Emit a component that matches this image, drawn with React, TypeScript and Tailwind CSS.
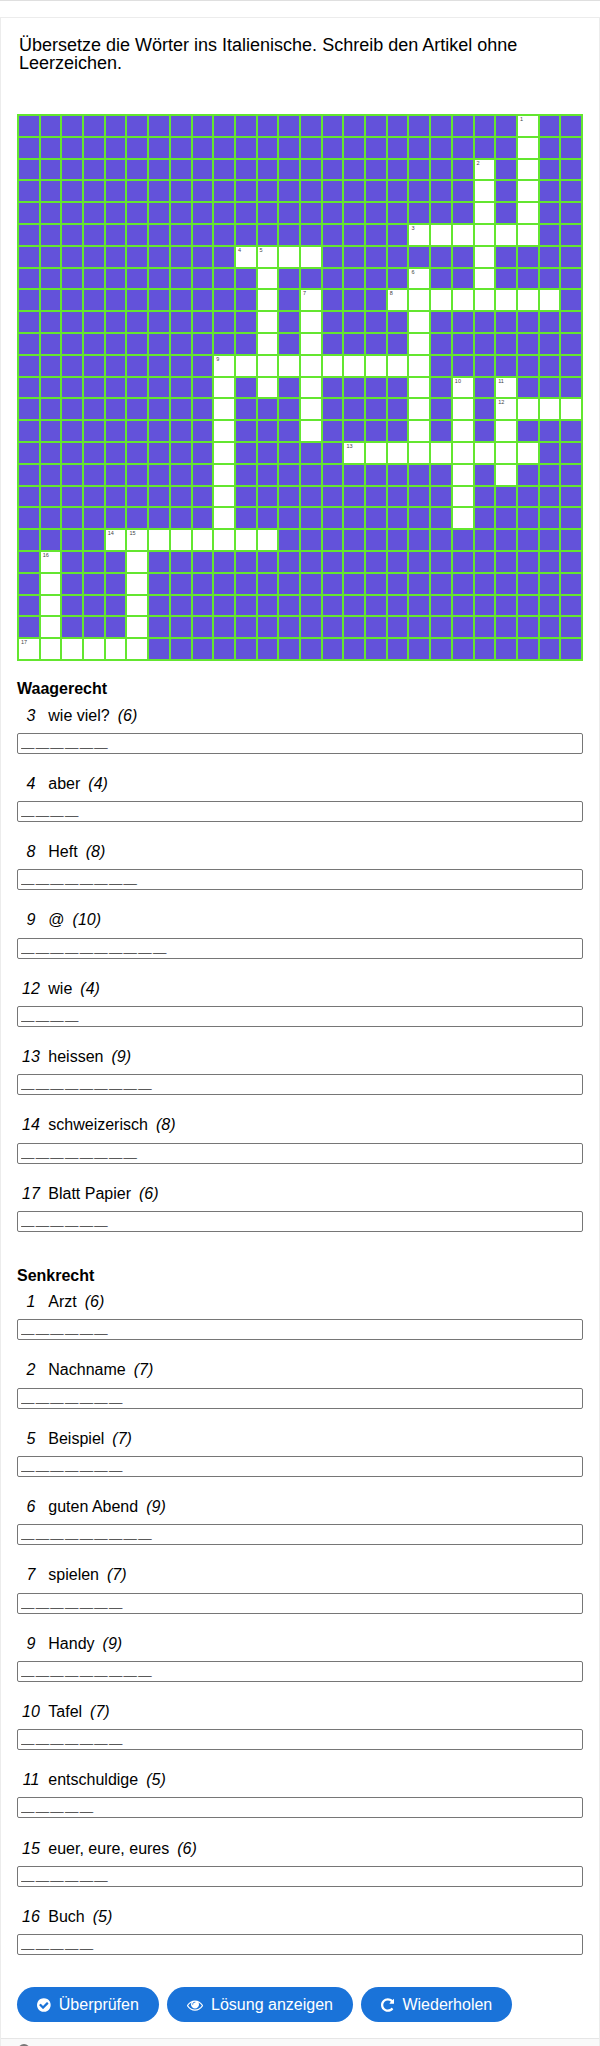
interface Clue {
  num: number
  text: string
  length: number
  row: number
  col: number
}

const COLS = 26
const ROWS = 25

const ACROSS: Clue[] = [
  { num: 3, text: 'wie viel?', length: 6, row: 5, col: 18 },
  { num: 4, text: 'aber', length: 4, row: 6, col: 10 },
  { num: 8, text: 'Heft', length: 8, row: 8, col: 17 },
  { num: 9, text: '@', length: 10, row: 11, col: 9 },
  { num: 12, text: 'wie', length: 4, row: 13, col: 22 },
  { num: 13, text: 'heissen', length: 9, row: 15, col: 15 },
  { num: 14, text: 'schweizerisch', length: 8, row: 19, col: 4 },
  { num: 17, text: 'Blatt Papier', length: 6, row: 24, col: 0 },
]

const DOWN: Clue[] = [
  { num: 1, text: 'Arzt', length: 6, row: 0, col: 23 },
  { num: 2, text: 'Nachname', length: 7, row: 2, col: 21 },
  { num: 5, text: 'Beispiel', length: 7, row: 6, col: 11 },
  { num: 6, text: 'guten Abend', length: 9, row: 7, col: 18 },
  { num: 7, text: 'spielen', length: 7, row: 8, col: 13 },
  { num: 9, text: 'Handy', length: 9, row: 11, col: 9 },
  { num: 10, text: 'Tafel', length: 7, row: 12, col: 20 },
  { num: 11, text: 'entschuldige', length: 5, row: 12, col: 22 },
  { num: 15, text: 'euer, eure, eures', length: 6, row: 19, col: 5 },
  { num: 16, text: 'Buch', length: 5, row: 20, col: 1 },
]

// cell key -> clue number, or null when no word starts there
const cells = new Map<number, number | null>()

function place(clue: Clue, step: number) {
  const start = clue.row * COLS + clue.col
  for (let i = 0; i < clue.length; i++) {
    const key = start + i * step
    if (!cells.has(key)) cells.set(key, null)
  }
  cells.set(start, clue.num)
}

ACROSS.forEach((clue) => place(clue, 1))
DOWN.forEach((clue) => place(clue, COLS))

function Grid() {
  return (
    <div className="grid h-[547px] w-[566px] grid-cols-[repeat(26,minmax(0,1fr))] grid-rows-[repeat(25,minmax(0,1fr))] border-r-2 border-b-2 border-[#64e62f]">
      {Array.from({ length: COLS * ROWS }, (_, key) =>
        cells.has(key) ? (
          <div
            key={key}
            className="overflow-hidden border-t-2 border-l-2 border-[#64e62f] bg-white pl-[2px] text-[5.5px] leading-[6px] text-[#444]"
          >
            {cells.get(key)}
          </div>
        ) : (
          <div key={key} className="border-t-2 border-l-2 border-[#64e62f] bg-[#6352da]" />
        )
      )}
    </div>
  )
}

function ClueList({ title, clues }: { title: string; clues: Clue[] }) {
  return (
    <section>
      <h2 className="h-[25.3px] text-base leading-[25px] font-bold">{title}</h2>
      <ul>
        {clues.map((clue) => (
          <li key={clue.num} className="h-[68.3px]">
            <div className="flex h-[31.2px] text-base leading-[27.1px]">
              <span className="mr-[3.3px] w-7 text-center italic">{clue.num}</span>
              <span>{clue.text}</span>
              <span className="ml-2 italic">({clue.length})</span>
            </div>
            <input
              type="text"
              defaultValue={'\uFF3F'.repeat(clue.length)}
              className="block h-[21px] w-full rounded-[2px] border border-[#767676] bg-white px-[3px] pb-[4px] font-['Liberation_Sans','Noto_Sans_CJK_JP',sans-serif] text-[13.33px] leading-[15px] font-bold tracking-[1.33px] text-black [-webkit-text-stroke:0.15px_#000]"
            />
          </li>
        ))}
      </ul>
    </section>
  )
}

function CheckIcon() {
  return (
    <svg viewBox="128 0 1536 1792" className="h-4 w-[13.7px]" fill="currentColor">
      <path d="M1412 734q0-28-18-46l-91-90q-19-19-45-19t-45 19l-408 407-226-226q-19-19-45-19t-45 19l-91 90q-18 18-18 46 0 27 18 45l362 362q19 19 45 19 27 0 46-19l543-543q18-18 18-45zm252 162q0 209-103 385.5t-279.5 279.5-385.5 103-385.5-103-279.5-279.5-103-385.5 103-385.5 279.5-279.5 385.5-103 385.5 103 279.5 279.5 103 385.5z" />
    </svg>
  )
}

function EyeIcon() {
  return (
    <svg viewBox="0 0 1792 1792" className="h-4 w-4" fill="currentColor">
      <path d="M1664 960q-152-236-381-353 61 104 61 225 0 185-131.5 316.5t-316.5 131.5-316.5-131.5-131.5-316.5q0-121 61-225-229 117-381 353 133 205 333.5 326.5t434.5 121.5 434.5-121.5 333.5-326.5zm-720-384q0-20-14-34t-34-14q-125 0-214.5 89.5t-89.5 214.5q0 20 14 34t34 14 34-14 14-34q0-86 61-147t147-61q20 0 34-14t14-34zm848 384q0 34-20 69-140 230-376.5 368.5t-499.5 138.5-499.5-139-376.5-368q-20-35-20-69t20-69q140-229 376.5-368t499.5-139 499.5 139 376.5 368q20 35 20 69z" />
    </svg>
  )
}

function RepeatIcon() {
  return (
    <svg viewBox="128 0 1536 1792" className="h-4 w-[13.7px]" fill="currentColor">
      <path d="M1664 256v448q0 26-19 45t-45 19h-448q-42 0-59-40-17-39 14-69l138-138q-148-137-349-137-104 0-198.5 40.5t-163.5 109.5-109.5 163.5-40.5 198.5 40.5 198.5 109.5 163.5 163.5 109.5 198.5 40.5q119 0 225-52t179-147q7-10 23-12 15 0 25 9l137 138q9 8 9.5 20.5t-7.5 22.5q-109 132-264 204.5t-327 72.5q-156 0-298-61t-245-164-164-245-61-298 61-298 164-245 245-164 298-61q147 0 284.5 55.5t244.5 156.5l130-129q29-31 70-14 39 17 39 59z" />
    </svg>
  )
}

const BUTTON =
  'flex h-[35px] items-center justify-center gap-2 rounded-full bg-[#1a73d9] text-base leading-4 text-white'

export default function App() {
  return (
    <div className="h-[2046px] overflow-hidden border-t border-[#dfdfdf] bg-white pt-4 font-['Liberation_Sans',Arial,sans-serif] text-black">
      <div className="h-[2040px] border border-[#ececec]">
        <main className="h-[2020px] px-4">
          <p className="h-24 pt-[18px] pl-0.5 text-[18px] leading-[18px]">
            Übersetze die Wörter ins Italienische. Schreib den Artikel ohne Leerzeichen.
          </p>
          <Grid />
          <div className="pt-[15.3px]">
            <ClueList title="Waagerecht" clues={ACROSS} />
          </div>
          <div className="pt-[14.9px]">
            <ClueList title="Senkrecht" clues={DOWN} />
          </div>
          <div className="flex gap-2 pt-[16.1px]">
            <button className={`${BUTTON} w-[142px]`}>
              <CheckIcon />
              Überprüfen
            </button>
            <button className={`${BUTTON} w-[186px]`}>
              <EyeIcon />
              Lösung anzeigen
            </button>
            <button className={`${BUTTON} w-[151px]`}>
              <RepeatIcon />
              Wiederholen
            </button>
          </div>
        </main>
        <footer className="h-5 border-t border-[#e6e6e6] bg-[#f9f9f9] pt-[5px] pl-[17px]">
          <div className="size-3 rounded-full border-2 border-[#777]" />
        </footer>
      </div>
    </div>
  )
}
